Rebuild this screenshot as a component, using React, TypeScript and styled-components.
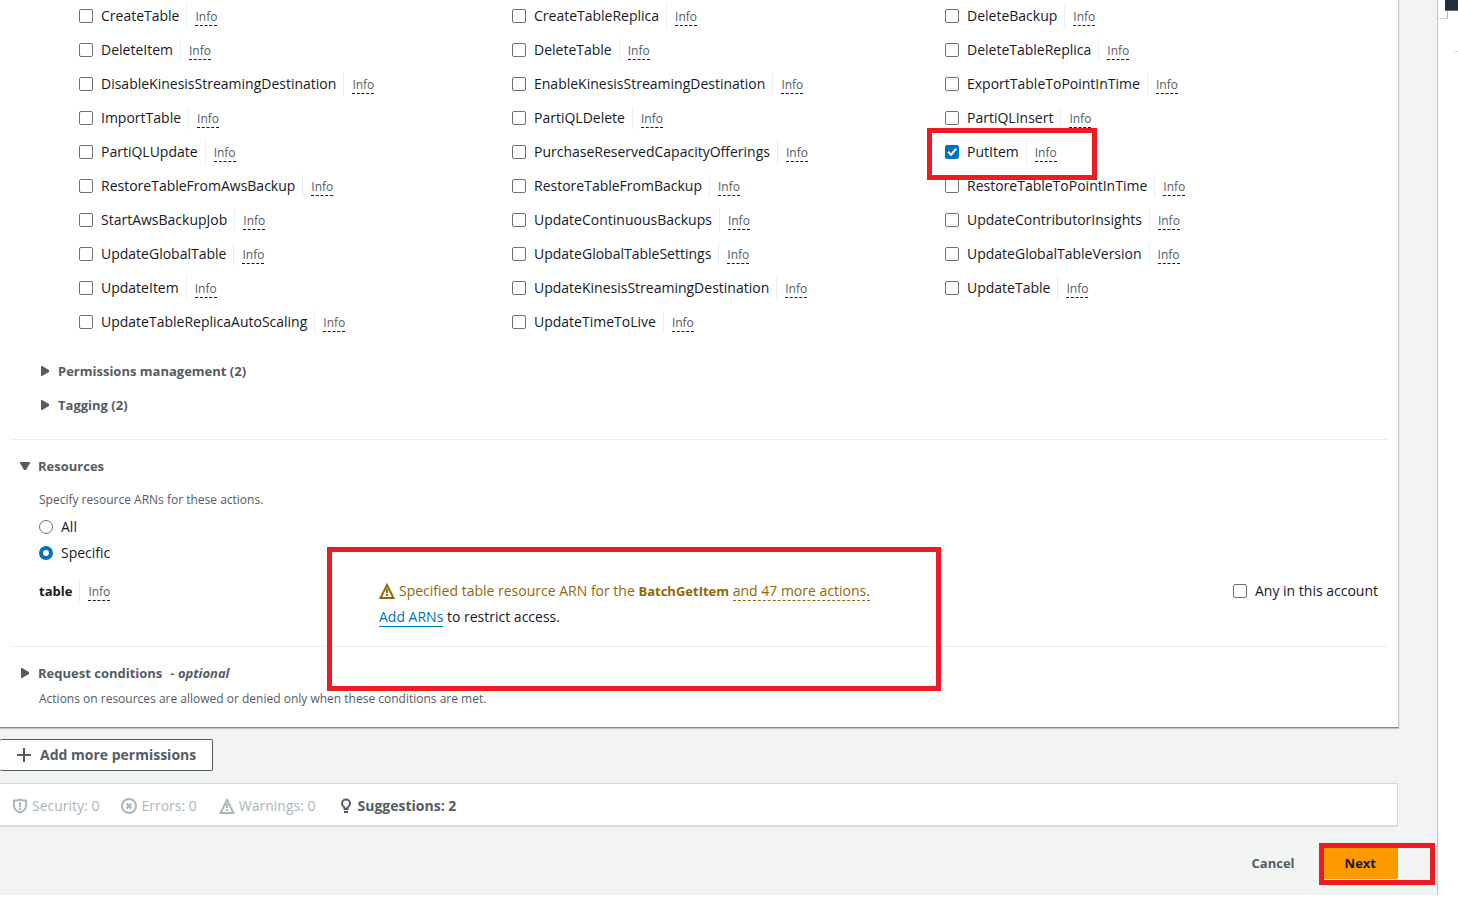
import React, { useId, useState } from "react";
import styled, { createGlobalStyle, css } from "styled-components";

const GlobalStyle = createGlobalStyle`
  * { box-sizing: border-box; }
  body {
    margin: 0;
    background: #ffffff;
    color: #16191f;
    font-family: "Open Sans", "Noto Sans", sans-serif;
    font-size: 14px;
    line-height: 22px;
  }
  button, input { font: inherit; margin: 0; }
  strong { font-size: 13px; }
`;

const Page = styled.div`
  display: grid;
  grid-template-columns: minmax(0, 1fr) 20px;
  align-items: start;
`;

const Main = styled.main`
  display: flex;
  flex-direction: column;
  padding: 0 38px 16px 0;
  background: #f2f3f3;
  border-right: 1px solid #bfc6c6;
`;

const SidePanel = styled.aside`
  display: flex;
  flex-direction: column;
  align-items: flex-end;
`;

const SideHeader = styled.div`
  width: 13px;
  height: 11px;
  background: #232f3e;
  border-bottom: 1px solid #687078;
`;

const SideEdge = styled.div`
  display: grid;
  grid-template-columns: 10px 1fr;
  width: 100%;
  height: 8px;

  &::before {
    content: "";
    border-right: 1px solid #aab7b8;
    border-bottom: 1px solid #d5dbdb;
  }
`;

const SideRule = styled.div`
  width: 3px;
  height: 1px;
  margin-top: 32px;
  background: #d5dbdb;
`;

const Card = styled.section`
  padding: 5px 10px 0;
  background: #ffffff;
  border-right: 1px solid #bfc6c6;
  border-bottom: 1px solid #7f8787;
  box-shadow: 0 1px 1px rgba(0, 28, 36, 0.2);
`;

const ActionGrid = styled.div`
  display: grid;
  grid-template-columns: repeat(3, minmax(0, 1fr));
  row-gap: 12px;
  padding: 0 10px 0 69px;
`;

const Cell = styled.div`
  position: relative;
  display: flex;
  align-items: center;
  height: 22px;
`;

const Choice = styled.label`
  display: flex;
  align-items: center;
  gap: 8px;
  white-space: nowrap;
`;

const Checkbox = styled.input`
  appearance: none;
  flex: none;
  display: grid;
  width: 14px;
  height: 14px;
  background: #ffffff;
  border: 1px solid #687078;
  border-radius: 2px;

  &:checked {
    background: #0073bb;
    border-color: #0073bb;
  }

  &:checked::after {
    content: "";
    width: 12px;
    height: 12px;
    background: #ffffff;
    clip-path: polygon(10% 54%, 24% 42%, 42% 60%, 78% 16%, 92% 28%, 44% 86%);
  }
`;

const Radio = styled.input`
  appearance: none;
  flex: none;
  width: 14px;
  height: 14px;
  background: #ffffff;
  border: 1px solid #687078;
  border-radius: 50%;

  &:checked { border: 4px solid #0073bb; }
`;

const InfoSlot = styled.span`
  display: flex;
  align-items: center;
  height: 22px;
  margin-left: 7px;
  padding-left: 8px;
  border-left: 1px solid #eaeded;
`;

const InfoLink = styled.a`
  margin-top: 2px;
  color: #545b64;
  border-bottom: 1px dashed #16191f;
  font-size: 12px;
  line-height: 16px;
  text-decoration: none;
`;

const Highlight = styled.span<{ $area: "action" | "warning" | "next" }>`
  position: absolute;
  z-index: 2;
  border: 5px solid #ed1c24;
  pointer-events: none;
  ${({ $area }) =>
    $area === "action" && css`left: -18px; top: -13px; width: 170px; height: 52px;`}
  ${({ $area }) =>
    $area === "warning" && css`left: -52px; top: -33px; width: 614px; height: 144px;`}
  ${({ $area }) =>
    $area === "next" && css`right: -37px; top: -4px; width: 116px; height: 42px;`}
`;

const Groups = styled.div`
  display: flex;
  flex-direction: column;
  align-items: flex-start;
  gap: 12px;
  padding: 27px 0 23px 30px;
`;

const Toggle = styled.button`
  display: flex;
  align-items: center;
  gap: 8px;
  padding: 0;
  color: #545b64;
  background: none;
  border: 0;
  font-size: 13px;
  font-weight: 700;
  line-height: 22px;
`;

const Section = styled.section`
  padding: 15px 10px 18px;
  border-top: 1px solid #eaeded;
`;

const Hint = styled.p`
  margin: 0;
  color: #545b64;
  font-size: 12px;
  line-height: 20px;
`;

const SectionBody = styled.div<{ $gap: number }>`
  padding: ${({ $gap }) => $gap}px 0 0 19px;
`;

const RadioGroup = styled.div`
  display: flex;
  flex-direction: column;
  align-items: flex-start;
  gap: 4px;
  padding-top: 6px;
`;

const ResourceRow = styled.div`
  display: grid;
  grid-template-columns: 340px minmax(0, 1fr) auto;
  align-items: start;
  padding-top: 16px;
`;

const Message = styled.div`
  position: relative;
  display: flex;
  flex-direction: column;
  gap: 4px;
`;

const WarningLine = styled.div`
  display: flex;
  align-items: center;
  gap: 4px;
  height: 22px;
  color: #906806;
  white-space: nowrap;
`;

const MoreLink = styled.a`
  color: inherit;
  border-bottom: 1px dashed #906806;
  line-height: 16px;
  text-decoration: none;
`;

const ArnLine = styled.div`
  height: 22px;
`;

const ArnLink = styled.a`
  color: #0073bb;
  border-bottom: 1px solid #0073bb;
  text-decoration: none;
`;

const AddButton = styled.button`
  display: flex;
  align-self: flex-start;
  align-items: center;
  gap: 8px;
  height: 32px;
  margin: 11px 0 12px;
  padding: 0 16px;
  color: #545b64;
  background: #ffffff;
  border: 1px solid #545b64;
  border-left-width: 0;
  border-radius: 2px;
  font-weight: 700;
`;

const StatusBar = styled.div`
  display: flex;
  align-items: center;
  gap: 22px;
  height: 44px;
  margin-right: 1px;
  padding: 2px 12px 0;
  background: #ffffff;
  border: 1px solid #d5dbdb;
  border-width: 1px 1px 2px 0;
`;

const Status = styled.span<{ $active?: boolean }>`
  display: flex;
  align-items: center;
  gap: 4px;
  color: ${({ $active }) => ($active ? "#545b64" : "#aab7b8")};
  font-weight: ${({ $active }) => ($active ? 700 : 400)};
`;

const Actions = styled.div`
  display: flex;
  justify-content: flex-end;
  gap: 6px;
  margin-right: 1px;
  padding-top: 20px;
`;

const ActionButton = styled.button<{ $primary?: boolean }>`
  position: relative;
  height: 32px;
  padding: 0 22px;
  color: ${({ $primary }) => ($primary ? "#16191f" : "#545b64")};
  background: ${({ $primary }) => ($primary ? "#ff9900" : "transparent")};
  border: 0;
  border-radius: 2px;
  font-size: 13px;
  font-weight: 700;
`;

const Caret = ({ open }: { open?: boolean }) => (
  <svg width="10" height="10" viewBox="0 0 10 10" fill="#545b64" aria-hidden="true">
    <path d={open ? "M0 1h10v1L6 9H4L0 2Z" : "M1 0h1l7 4v2L2 10H1Z"} />
  </svg>
);

const WarningIcon = () => (
  <svg width="16" height="16" viewBox="0 0 16 16" fill="none" stroke="currentColor" strokeWidth="2" aria-hidden="true">
    <path d="M8 2 1.500 15h13L8 2ZM8 6v4M8 11v2" />
  </svg>
);

const ShieldIcon = () => (
  <svg width="16" height="16" viewBox="0 0 16 16" fill="none" stroke="currentColor" strokeWidth="2" aria-hidden="true">
    <path d="M2 2.500h3l3-1 3 1h3v5.500c0 3-2 5-6 6.500-4-1.500-6-3.500-6-6.500V2.500ZM8 4v5M8 10v2" />
  </svg>
);

const ErrorIcon = () => (
  <svg width="16" height="16" viewBox="0 0 16 16" fill="none" stroke="currentColor" strokeWidth="2" aria-hidden="true">
    <circle cx="8" cy="8" r="7" />
    <path d="m5.500 5.500 5 5M10.500 5.500l-5 5" />
  </svg>
);

const BulbIcon = () => (
  <svg width="16" height="16" viewBox="0 0 16 16" fill="none" stroke="currentColor" strokeWidth="2" aria-hidden="true">
    <path d="M6.500 11V9.500C5 8.500 4 7.500 4 5.500a4 4 0 0 1 8 0c0 2-1 3-2.500 4V11h-3ZM6 14h4" />
  </svg>
);

const PlusIcon = () => (
  <svg width="16" height="16" viewBox="0 0 16 16" fill="none" stroke="currentColor" strokeWidth="2" aria-hidden="true">
    <path d="M8 1v14M1 8h14" />
  </svg>
);

const Info = () => (
  <InfoSlot>
    <InfoLink href="#info">Info</InfoLink>
  </InfoSlot>
);

const actions = [
  "CreateTable", "CreateTableReplica", "DeleteBackup",
  "DeleteItem", "DeleteTable", "DeleteTableReplica",
  "DisableKinesisStreamingDestination", "EnableKinesisStreamingDestination", "ExportTableToPointInTime",
  "ImportTable", "PartiQLDelete", "PartiQLInsert",
  "PartiQLUpdate", "PurchaseReservedCapacityOfferings", "PutItem",
  "RestoreTableFromAwsBackup", "RestoreTableFromBackup", "RestoreTableToPointInTime",
  "StartAwsBackupJob", "UpdateContinuousBackups", "UpdateContributorInsights",
  "UpdateGlobalTable", "UpdateGlobalTableSettings", "UpdateGlobalTableVersion",
  "UpdateItem", "UpdateKinesisStreamingDestination", "UpdateTable",
  "UpdateTableReplicaAutoScaling", "UpdateTimeToLive",
];

function ActionOption({ name }: { name: string }) {
  const id = useId();
  return (
    <Cell>
      <Choice htmlFor={id}>
        <Checkbox id={id} type="checkbox" defaultChecked={name === "PutItem"} />
        {name}
      </Choice>
      <Info />
      {name === "PutItem" && <Highlight $area="action" />}
    </Cell>
  );
}

export default function App() {
  const [scope, setScope] = useState("Specific");

  return (
    <>
      <GlobalStyle />
      <Page>
        <Main>
          <Card>
            <ActionGrid>
              {actions.map((name) => (
                <ActionOption key={name} name={name} />
              ))}
            </ActionGrid>
            <Groups>
              <Toggle><Caret />Permissions management (2)</Toggle>
              <Toggle><Caret />Tagging (2)</Toggle>
            </Groups>
            <Section>
              <Toggle><Caret open />Resources</Toggle>
              <SectionBody $gap={13}>
                <Hint>Specify resource ARNs for these actions.</Hint>
                <RadioGroup role="radiogroup" aria-label="Resources">
                  {["All", "Specific"].map((value) => (
                    <Choice key={value}>
                      <Radio
                        type="radio"
                        name="scope"
                        checked={scope === value}
                        onChange={() => setScope(value)}
                      />
                      {value}
                    </Choice>
                  ))}
                </RadioGroup>
                <ResourceRow>
                  <Cell><strong>table</strong><Info /></Cell>
                  <Message>
                    <WarningLine>
                      <WarningIcon />
                      <span>
                        Specified table resource ARN for the <strong>BatchGetItem</strong>{" "}
                        <MoreLink href="#actions">and 47 more actions.</MoreLink>
                      </span>
                    </WarningLine>
                    <ArnLine><ArnLink href="#arns">Add ARNs</ArnLink> to restrict access.</ArnLine>
                    <Highlight $area="warning" />
                  </Message>
                  <Choice><Checkbox type="checkbox" />Any in this account</Choice>
                </ResourceRow>
              </SectionBody>
            </Section>
            <Section>
              <Toggle><Caret />Request conditions <em>- optional</em></Toggle>
              <SectionBody $gap={5}>
                <Hint>Actions on resources are allowed or denied only when these conditions are met.</Hint>
              </SectionBody>
            </Section>
          </Card>
          <AddButton><PlusIcon />Add more permissions</AddButton>
          <StatusBar>
            <Status><ShieldIcon />Security: 0</Status>
            <Status><ErrorIcon />Errors: 0</Status>
            <Status><WarningIcon />Warnings: 0</Status>
            <Status $active><BulbIcon />Suggestions: 2</Status>
          </StatusBar>
          <Actions>
            <ActionButton>Cancel</ActionButton>
            <ActionButton $primary>Next<Highlight $area="next" /></ActionButton>
          </Actions>
        </Main>
        <SidePanel>
          <SideHeader />
          <SideEdge />
          <SideRule />
        </SidePanel>
      </Page>
    </>
  );
}
